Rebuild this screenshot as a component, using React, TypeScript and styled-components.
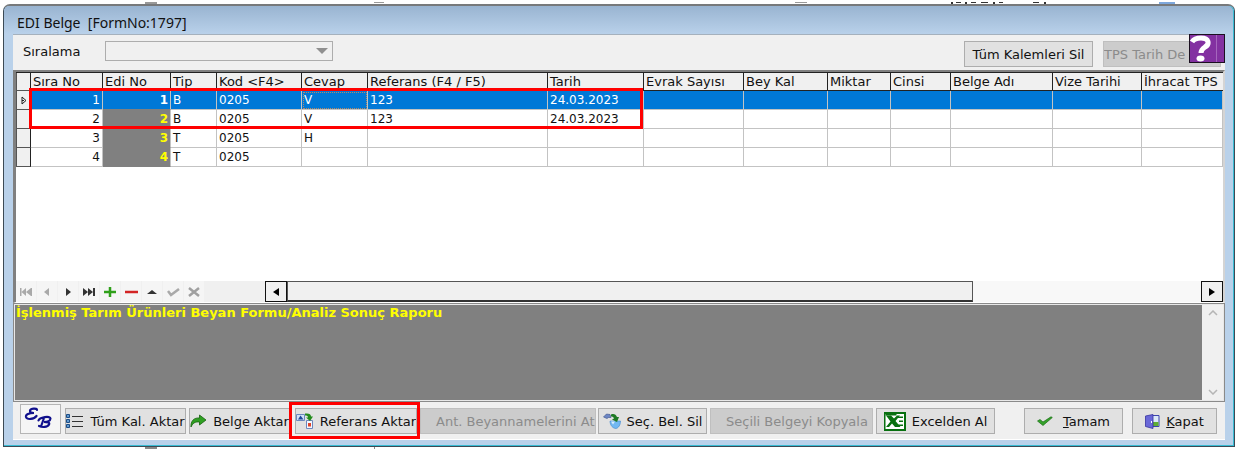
import React from 'react';
import styled, { createGlobalStyle, css } from 'styled-components';

const ui = '"DejaVu Sans", Verdana, sans-serif';

const GlobalStyle = createGlobalStyle`
  * { box-sizing: border-box; }
  body { margin: 0; background: #fff; font-family: ${ui}; font-size: 13px; color: #111; }
  button, select { font: inherit; color: inherit; margin: 0; border-radius: 0; }
`;

const Desktop = styled.div`
  display: flex;
  flex-direction: column;
  min-height: 100vh;
  padding-left: 3px;
`;

const Behind = styled.div<{ $h: number }>`
  height: ${(p) => p.$h}px;
  overflow: hidden;
  svg { display: block; width: 100%; height: 100%; }
`;

const Window = styled.section`
  flex: 1;
  display: flex;
  flex-direction: column;
  border: 1px solid #3c4a55;
  border-top: 2px solid #77797b;
  border-radius: 7px 7px 0 0;
  background: #b9d1ea;
  padding: 0 9px 6px;
  box-shadow: inset -1px -1px 0 #38bcd4;
`;

const TitleBar = styled.header`
  height: 28px;
  margin: 0 -9px;
  padding: 0 13px;
  border-radius: 5px 5px 0 0;
  background: linear-gradient(#99b4d1, #b9d1ea);
  box-shadow: inset -1px 0 0 #38bcd4;
`;

const Title = styled.h1`
  margin: 0;
  font: 400 14px/34px "Noto Sans", "Open Sans", sans-serif;
  white-space: pre;
`;

const Client = styled.main`
  flex: 1;
  display: flex;
  flex-direction: column;
  min-width: 0;
  background: #f0f0f0;
  border-top: 1px solid #a5b1bd;
`;

const Toolbar = styled.div`
  position: relative;
  display: flex;
  align-items: flex-start;
  height: 35px;
  padding: 6px 4px 0 10px;
`;

const Field = styled.label`
  display: flex;
  align-items: center;
  gap: 25px;
  height: 20px;
`;

const Combo = styled.select`
  width: 228px;
  height: 20px;
  border: 1px solid #adadad;
  appearance: none;
  background: #f0f0f0;
  &:disabled { opacity: 1; }
`;

const ComboWrap = styled.span`
  display: grid;
  align-items: center;
  > * { grid-area: 1 / 1; }
  svg { justify-self: end; margin-right: 5px; }
`;

const Button = styled.button<{ $w: number; $indent?: number }>`
  flex: 0 0 ${(p) => p.$w}px;
  height: 26px;
  display: flex;
  align-items: center;
  justify-content: ${(p) => (p.$indent === undefined ? 'center' : 'flex-start')};
  gap: 6px;
  padding: 0 0 0 ${(p) => p.$indent ?? 0}px;
  overflow: hidden;
  white-space: nowrap;
  border: 1px solid #adadad;
  background: #e1e1e1;
  svg { flex: none; }
  &:disabled { color: #8b8b8b; background: #cccccc; border-color: #bfbfbf; }
`;

const ToolbarActions = styled.div`
  display: flex;
  gap: 10px;
  margin-left: auto;
`;

const Help = styled.button`
  position: absolute;
  top: -1px;
  right: 0;
  width: 36px;
  height: 29px;
  padding: 0;
  border: 1px solid #1b1020;
  background: #8331a1;
  svg { display: block; }
`;

const GridPanel = styled.div`
  flex: 1;
  display: flex;
  flex-direction: column;
  min-height: 232px;
  border: 2px solid #808080;
  border-right-color: #d4d4d4;
  border-bottom: 1px solid #fff;
  border-left-width: 3px;
  background: #fff;
`;

const GridScroll = styled.div`
  flex: 1;
  position: relative;
  overflow: hidden;
`;

const Table = styled.table`
  width: 100%;
  table-layout: fixed;
  border-collapse: separate;
  border-spacing: 0;
  font-size: 12px;
  border-top: 1px solid #222;
`;

const HeadCell = styled.th`
  height: 18px;
  padding: 0 2px;
  font-size: 13px;
  line-height: 17px;
  font-weight: 400;
  text-align: left;
  white-space: nowrap;
  overflow: hidden;
  background: #f0f0f0;
  border-right: 1px solid #222;
  border-bottom: 1px solid #222;
  &:last-child { border-right: 0; }
`;

const Marker = styled.th`
  padding: 0;
  background: #f0f0f0;
  border-right: 1px solid #222;
  border-bottom: 1px solid #555;
  border-left: 1px solid #555;
  svg { display: block; margin: 0 auto; }
`;

const Cell = styled.td<{ $kind?: 'num' | 'edi'; $focus?: boolean }>`
  height: 19px;
  padding: 0 2px;
  line-height: 18px;
  white-space: nowrap;
  overflow: hidden;
  border-right: 1px solid #c3c3c3;
  border-bottom: 1px solid #c3c3c3;
  ${(p) => p.$kind && css`text-align: right;`}
  ${(p) => p.$kind === 'edi' && css`
    font-weight: 700;
    color: #ff0;
    background: #808080;
    border-bottom-color: #808080;
  `}
  ${(p) => p.$focus && css`outline: 1px dotted #b98a62; outline-offset: -2px;`}
`;

const Row = styled.tr<{ $selected: boolean }>`
  ${(p) => p.$selected && css`
    ${Cell} { background: #0078d7; color: #fff; }
  `}
`;

const RowFrame = styled.div`
  position: absolute;
  left: 13px;
  top: 16px;
  width: 614px;
  height: 41px;
  border: 3px solid #f00;
  pointer-events: none;
`;

const GridFooter = styled.div`
  display: flex;
  height: 21px;
  background: #f0f0f0;
`;

const Navigator = styled.div`
  display: flex;
  flex: 0 0 249px;
`;

const NavButton = styled.button`
  flex: none;
  width: 20px;
  height: 21px;
  margin-right: 1px;
  padding: 0;
  border: 0;
  background: #f5f5f5;
  display: grid;
  place-items: center;
`;

const ScrollButton = styled.button`
  flex: 0 0 22px;
  display: grid;
  place-items: center;
  padding: 0;
  border: 1px solid #111;
  background: #f0f0f0;
`;

const Track = styled.div`
  flex: 1;
  background: #f8f8f8;
`;

const Thumb = styled.div`
  width: 75%;
  height: 100%;
  border: 1px solid #555;
  border-bottom: 2px solid #333;
  background: #f0f0f0;
`;

const Memo = styled.div`
  display: flex;
  height: 99px;
  border: 1px solid #8a8a8a;
  box-shadow: inset 0 0 0 1px #e8e8e8;
  padding: 1px;
`;

const MemoText = styled.p`
  flex: 1;
  margin: 0;
  padding: 0 1px;
  background: #808080;
  color: #ff0;
  font-weight: 700;
  font-size: 13px;
  line-height: 16px;
`;

const MemoScroll = styled.div`
  display: flex;
  flex-direction: column;
  justify-content: space-between;
  align-items: center;
  width: 21px;
  padding: 5px 0;
`;

const ActionBar = styled.footer`
  display: flex;
  align-items: flex-start;
  height: 38px;
  padding: 6px 8px 0 7px;
  border-bottom: 1px solid #fff;
`;

const Gap = styled.span<{ $w: number }>`
  flex: 0 0 ${(p) => p.$w}px;
`;

const Logo = styled.button`
  flex: 0 0 41px;
  height: 30px;
  margin-top: -4px;
  padding: 0;
  border: 1px solid #b5b5b5;
  background: #f5f5f5;
  svg { display: block; }
`;

const Highlight = styled.div`
  display: flex;
  flex: none;
  margin: -6px 0 0 -1px;
  height: 37px;
  padding: 3px 0 0 3px;
  border: 3px solid #f00;
`;

const Closing = styled.div`
  display: flex;
  gap: 9px;
  margin-left: auto;
`;

const columns = [
  { name: 'Sıra No', w: 72 }, { name: 'Edi No', w: 68 }, { name: 'Tip', w: 46 },
  { name: 'Kod <F4>', w: 85 }, { name: 'Cevap', w: 66 }, { name: 'Referans (F4 / F5)', w: 180 },
  { name: 'Tarih', w: 96 }, { name: 'Evrak Sayısı', w: 100 }, { name: 'Bey Kal', w: 84 },
  { name: 'Miktar', w: 63 }, { name: 'Cinsi', w: 60 }, { name: 'Belge Adı', w: 102 },
  { name: 'Vize Tarihi', w: 89 }, { name: 'İhracat TPS', w: 0 },
];

const rows = [
  ['1', '1', 'B', '0205', 'V', '123', '24.03.2023'],
  ['2', '2', 'B', '0205', 'V', '123', '24.03.2023'],
  ['3', '3', 'T', '0205', 'H', '', ''],
  ['4', '4', 'T', '0205', '', '', ''],
];

const navItems: { label: string; art: React.ReactNode }[] = [
  { label: 'İlk', art: <g fill="#a9a9a9"><path d="M1 3h1.500v8H1zM7 3v8L2.500 7zM12 3v8L7 7zM12 3h1v8h-1z" /></g> },
  { label: 'Önceki', art: <path fill="#a9a9a9" d="M9 3v8L4 7z" /> },
  { label: 'Sonraki', art: <path fill="#333" d="M5 3v8l5-4z" /> },
  { label: 'Son', art: <g fill="#333"><path d="M1 3v8l5-4zM6 3v8l5-4zM11 3h2v8h-2z" /></g> },
  { label: 'Ekle', art: <path stroke="#2fa01a" strokeWidth="2.500" d="M1 7h12M7 2v10" /> },
  { label: 'Sil', art: <path stroke="#d32424" strokeWidth="2.500" d="M1 7h13" /> },
  { label: 'Düzenle', art: <path fill="#333" d="M2 9l5-4 5 4z" /> },
  { label: 'Kaydet', art: <path fill="none" stroke="#a9a9a9" strokeWidth="2.500" d="M2 6l3 4 8-6" /> },
  { label: 'Vazgeç', art: <path stroke="#a0a0a0" strokeWidth="2.500" d="M2 3l10 8M12 3L2 11" /> },
];

const ListIcon = () => (
  <svg width="18" height="14" viewBox="0 0 18 14">
    <path stroke="#333" d="M6 2.500h11M6 7.500h11M6 12.500h11" />
    <path fill="#5f9ad0" stroke="#1d4d86" d="M.5 .5h3v3h-3zM.5 5.500h3v3h-3zM.5 10.500h3v3h-3z" />
  </svg>
);
const ForwardIcon = () => (
  <svg width="17" height="14" viewBox="0 0 17 14">
    <path fill="#2fa022" stroke="#17610f" strokeWidth=".8" d="M1 13C.5 7 4 3.500 9.500 4V1L16 6l-6.500 5V8C5 7.500 3 9 1 13z" />
  </svg>
);
const TransferIcon = () => (
  <svg width="18" height="16" viewBox="0 0 18 16">
    <path fill="#cfe0f7" stroke="#6c87bd" d="M.5 1.500h8v6h-8z" />
    <path fill="#20489b" d="M2 6.500l2.500-4 3 4z" />
    <path fill="#f4f7ff" stroke="#6c87bd" d="M10.500 7.500h6v8h-6z" />
    <path fill="#e0452b" d="M12 10h3v3.500h-3z" />
    <path fill="#238b1c" d="M9 .5c4-.5 6 .5 6 3h2L14 8l-4-3.500h2c0-1.500-1-2-3-2z" />
  </svg>
);
const RecycleIcon = () => (
  <svg width="18" height="16" viewBox="0 0 18 16">
    <path fill="#6d86c4" stroke="#3b5188" strokeWidth=".6" d="M.5 4l3-3 3.500.5L8 4.500H5.500L4 5.500z" />
    <path fill="#72b8f2" stroke="#3f86cf" strokeWidth=".6" d="M7 8h10.500c0 4-2 7-4.500 7.500-3 0-6-3-6-7.500z" />
    <path fill="#d7edff" d="M8 8.500h4l-2 3z" />
    <path fill="#1f7a25" d="M8 1.500c3-1 5 0 6 2.500h2l-2 5-5-2.500 2-1C10.500 4 9.500 3.500 8 3.500z" />
  </svg>
);
const ExcelIcon = () => (
  <svg width="22" height="19" viewBox="0 0 22 19">
    <path fill="#087010" d="M0 0h22v19H0z" />
    <path fill="#fff" d="M1.500 2H20v15H1.500z" />
    <path fill="#087010" d="M1.500 2h11v1.500h-11zM14 4.500h5V6h-5zM15 8.500h4V10h-4zM14 12.500h5V14h-5z" />
    <path fill="#087010" d="M2 3.500h5l3 3 3-3h3L11.500 9l5 6H11L8 11.500 5 15H2l4.500-5.500z" />
  </svg>
);
const CheckIcon = () => (
  <svg width="20" height="10" viewBox="0 0 20 10">
    <path fill="#35a32b" stroke="#176d12" strokeWidth=".7" d="M.5 5L3 3.500l3 2.500L14 .8l1.300.7L6 9.500z" />
  </svg>
);
const DoorIcon = () => (
  <svg width="15" height="15" viewBox="0 0 15 15">
    <path fill="#dbe9f8" stroke="#3b44ae" d="M5.500 1.500h8.500v11H5.500z" />
    <path fill="#5fae34" d="M8 8h5.500v4H8z" />
    <path fill="#6a68d8" stroke="#3634a0" strokeWidth=".8" d="M.5 2L8 .5v14L.5 12.500z" />
    <path fill="#fff" d="M6 7h1v2H6z" />
  </svg>
);

export default function App() {
  return (
    <Desktop>
      <GlobalStyle />
      <Behind $h={4} aria-hidden>
        <svg preserveAspectRatio="none" viewBox="0 0 1232 4">
          <path fill="#999" d="M142 2h12v2h-12zM792 2h12v1h-12zM371 2h10v1h-10z" />
          <path fill="#333" d="M948 2h2v2h-2zM953 2h5v1h-5zM962 2h2v2h-2zM968 2h5v1h-5zM978 2h7v1h-7zM990 2h2v2h-2zM996 2h4v1h-4zM1030 2h6v1h-6zM1041 2h2v2h-2z" />
          <path fill="#7da7dc" d="M1156 2h16v2h-16z" />
        </svg>
      </Behind>
      <Window>
        <TitleBar><Title>EDI Belge  [FormNo:1797]</Title></TitleBar>
        <Client>
          <Toolbar>
            <Field>
              Sıralama
              <ComboWrap>
                <Combo disabled aria-label="Sıralama" />
                <svg width="12" height="6" viewBox="0 0 12 6"><path fill="#8f8f8f" d="M0 0h12L6 6z" /></svg>
              </ComboWrap>
            </Field>
            <ToolbarActions>
              <Button $w={129}>Tüm Kalemleri Sil</Button>
              <Button $w={118} $indent={0} disabled>TPS Tarih De</Button>
            </ToolbarActions>
            <Help aria-label="Yardım">
              <svg width="34" height="27" viewBox="0 0 34 27">
                <path fill="none" stroke="#fff" strokeWidth="5" d="M2 7C4 3.500 8 3 11 3c8 0 9 6 4 9-3 2-4 3-4 6" />
                <ellipse cx="10.500" cy="23.500" rx="4" ry="3" fill="#fff" />
                <path stroke="#a566bd" d="M26.500 0v27" />
              </svg>
            </Help>
          </Toolbar>
          <GridPanel>
            <GridScroll>
              <Table>
                <colgroup>
                  <col style={{ width: 15 }} />
                  {columns.map((c) => <col key={c.name} style={c.w ? { width: c.w } : undefined} />)}
                </colgroup>
                <thead>
                  <tr>
                    <Marker aria-label="İşaret" />
                    {columns.map((c) => <HeadCell key={c.name} scope="col">{c.name}</HeadCell>)}
                  </tr>
                </thead>
                <tbody>
                  {rows.map((r, i) => (
                    <Row key={r[0]} $selected={i === 0}>
                      <Marker scope="row" aria-label={`Satır ${r[0]}`}>
                        {i === 0 && <svg width="6" height="9" viewBox="0 0 6 9"><path fill="none" stroke="#222" d="M1 1l4 3.500L1 8zM1 4.500h2" /></svg>}
                      </Marker>
                      {columns.map((c, j) => (
                        <Cell key={c.name} $kind={j === 0 ? 'num' : j === 1 ? 'edi' : undefined} $focus={i === 0 && j === 4}>
                          {r[j]}
                        </Cell>
                      ))}
                    </Row>
                  ))}
                </tbody>
              </Table>
              <RowFrame />
            </GridScroll>
            <GridFooter>
              <Navigator>
                {navItems.map((n) => (
                  <NavButton key={n.label} aria-label={n.label}>
                    <svg width="14" height="14" viewBox="0 0 14 14">{n.art}</svg>
                  </NavButton>
                ))}
              </Navigator>
              <ScrollButton aria-label="Sola kaydır"><svg width="6" height="8" viewBox="0 0 6 8"><path d="M6 0v8L0 4z" /></svg></ScrollButton>
              <Track><Thumb /></Track>
              <ScrollButton aria-label="Sağa kaydır"><svg width="6" height="8" viewBox="0 0 6 8"><path d="M0 0v8l6-4z" /></svg></ScrollButton>
            </GridFooter>
          </GridPanel>
          <Memo>
            <MemoText>İşlenmiş Tarım Ürünleri Beyan Formu/Analiz Sonuç Raporu</MemoText>
            <MemoScroll>
              <svg width="10" height="6" viewBox="0 0 10 6"><path fill="none" stroke="#b5b5b5" strokeWidth="1.500" d="M1 5l4-4 4 4" /></svg>
              <svg width="10" height="6" viewBox="0 0 10 6"><path fill="none" stroke="#b5b5b5" strokeWidth="1.500" d="M1 1l4 4 4-4" /></svg>
            </MemoScroll>
          </Memo>
          <ActionBar>
            <Logo aria-label="EB">
              <svg width="39" height="28" viewBox="0 0 39 28" fill="none" stroke="#10108c" strokeWidth="2.200" strokeLinecap="round">
                <path d="M16 5c0-2-6-2-7 .5-.5 2 2 2.500 4 2.500-5 0-8.500 1.500-8 4 1 3 8 2.500 10.500-1" />
                <path d="M23 13l-3 8.500M17.500 15.500c1-3.500 12-5 12-2 0 2.500-4 3.500-6.500 3.500 4 0 6 .5 5 2.500-1.500 3-7 3-10 1.500" />
              </svg>
            </Logo>
            <Gap $w={4} />
            <Button $w={121}><ListIcon />Tüm Kal. Aktar</Button>
            <Gap $w={3} />
            <Button $w={101}><ForwardIcon />Belge Aktar</Button>
            <Highlight><Button $w={122}><TransferIcon />Referans Aktar</Button></Highlight>
            <Button $w={176} $indent={15} disabled>Ant. Beyannamelerini At</Button>
            <Gap $w={2} />
            <Button $w={109}><RecycleIcon />Seç. Bel. Sil</Button>
            <Gap $w={3} />
            <Button $w={163} $indent={15} disabled>Seçili Belgeyi Kopyala</Button>
            <Gap $w={3} />
            <Button $w={119}><ExcelIcon />Excelden Al</Button>
            <Closing>
              <Button $w={99}><CheckIcon /><span><u>T</u>amam</span></Button>
              <Button $w={85}><DoorIcon /><span><u>K</u>apat</span></Button>
            </Closing>
          </ActionBar>
        </Client>
      </Window>
      <Behind $h={2} aria-hidden>
        <svg preserveAspectRatio="none" viewBox="0 0 1232 2"><path fill="#888" d="M142 0h12v2h-12zM371 0h1v2h-1z" /></svg>
      </Behind>
    </Desktop>
  );
}
